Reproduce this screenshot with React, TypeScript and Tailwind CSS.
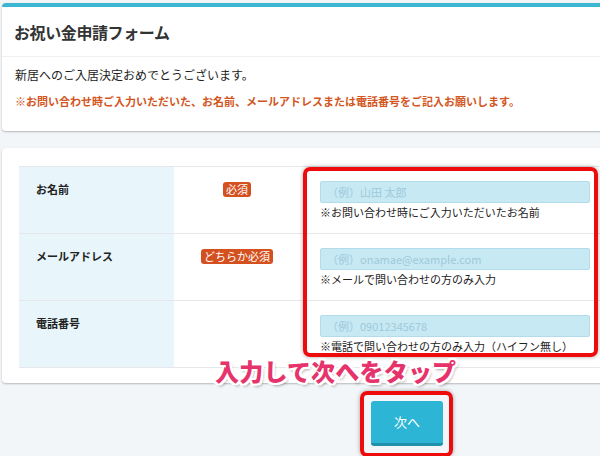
import React from 'react';

type Row = {
  label: string;
  badge?: string;
  placeholder: string;
  hint: string;
};

const rows: Row[] = [
  { label: 'お名前', badge: '必須', placeholder: '（例）山田 太郎', hint: '※お問い合わせ時にご入力いただいたお名前' },
  { label: 'メールアドレス', badge: 'どちらか必須', placeholder: '（例）onamae@example.com', hint: '※メールで問い合わせの方のみ入力' },
  { label: '電話番号', placeholder: '（例）09012345678', hint: '※電話で問い合わせの方のみ入力（ハイフン無し）' },
];

export default function App() {
  return (
    <div className="relative w-[600px] h-[456px] overflow-hidden bg-[#f3f6f9] pt-[3px] pl-[2px] font-['Noto_Sans_CJK_JP',sans-serif] text-[#222]">
      {/* Intro card */}
      <div className="w-[620px] h-[128px] bg-white border-t-4 border-[#3cb6d1] rounded-sm shadow-[0_1px_2px_rgba(0,0,0,0.25)]">
        <div className="h-[50px] flex items-center pl-[12px] border-b border-[#efefef]">
          <h1 className="text-[16px] font-bold tracking-tight text-[#333]">お祝い金申請フォーム</h1>
        </div>
        <div className="pl-[13px] pt-[8px]">
          <p className="text-[12px] leading-[20px] text-[#222]">新居へのご入居決定おめでとうございます。</p>
          <p className="mt-[6px] text-[11px] leading-[20px] font-bold text-[#d2561d]">
            ※お問い合わせ時ご入力いただいた、お名前、メールアドレスまたは電話番号をご記入お願いします。
          </p>
        </div>
      </div>

      {/* Form card */}
      <div className="mt-[17px] w-[620px] h-[235px] bg-white rounded-sm shadow-[0_1px_2px_rgba(0,0,0,0.25)] pt-[18px] pl-[17px]">
        <div className="border-t border-[#e4e8ea]">
          {rows.map((r) => (
            <div key={r.label} className="flex h-[67px] border-b border-[#e4e8ea]">
              <div className="w-[155px] bg-[#e8f6fb] pl-[17px] pt-[14px] text-[11px] font-bold text-[#222]">{r.label}</div>
              <div className="w-[126px] flex justify-center pt-[15px]">
                {r.badge && (
                  <span className="h-[15px] px-[3px] rounded-[3px] bg-[#d4501f] text-white text-[11px] leading-[15px]">
                    {r.badge}
                  </span>
                )}
              </div>
              <div className="flex-1 pl-[20px] pt-[14px]">
                <div className="w-[270px] h-[22px] bg-[#c7e9f4] border border-[#b2dceb] rounded-[2px] flex items-center pl-[6px] text-[11px] text-[#9ecadb]">
                  {r.placeholder}
                </div>
                <p className="mt-[2px] text-[11px] leading-[14px] text-[#222]">{r.hint}</p>
              </div>
            </div>
          ))}
        </div>
      </div>

      {/* Next button */}
      <div className="flex justify-center pl-[212px] mt-[18px]">
        <button className="w-[72px] h-[45px] bg-[#2cb5d4] border-b-[3px] border-[#1f90aa] rounded-[3px] text-white text-[13px]">
          次へ
        </button>
      </div>

      {/* Annotations */}
      <div className="absolute left-[303px] top-[167px] w-[295px] h-[190px] border-4 border-[#ee0b0b] rounded-[7px] shadow-[0_0_4px_rgba(0,0,0,0.35)]" />
      <div className="absolute left-[360px] top-[391px] w-[93px] h-[66px] border-4 border-[#ee0b0b] rounded-[7px] shadow-[0_0_4px_rgba(0,0,0,0.35)]" />
      <div className="absolute left-[215px] top-[356px] text-[24px] leading-[30px] font-black tracking-[0.2px] text-[#e6336c] [text-shadow:-2px_-2px_0_#fff,2px_-2px_0_#fff,-2px_2px_0_#fff,2px_2px_0_#fff,0_-2px_0_#fff,0_2px_0_#fff,-2px_0_0_#fff,2px_0_0_#fff,2px_3px_3px_rgba(0,0,0,0.35)]">
        入力して次へをタップ
      </div>
    </div>
  );
}
